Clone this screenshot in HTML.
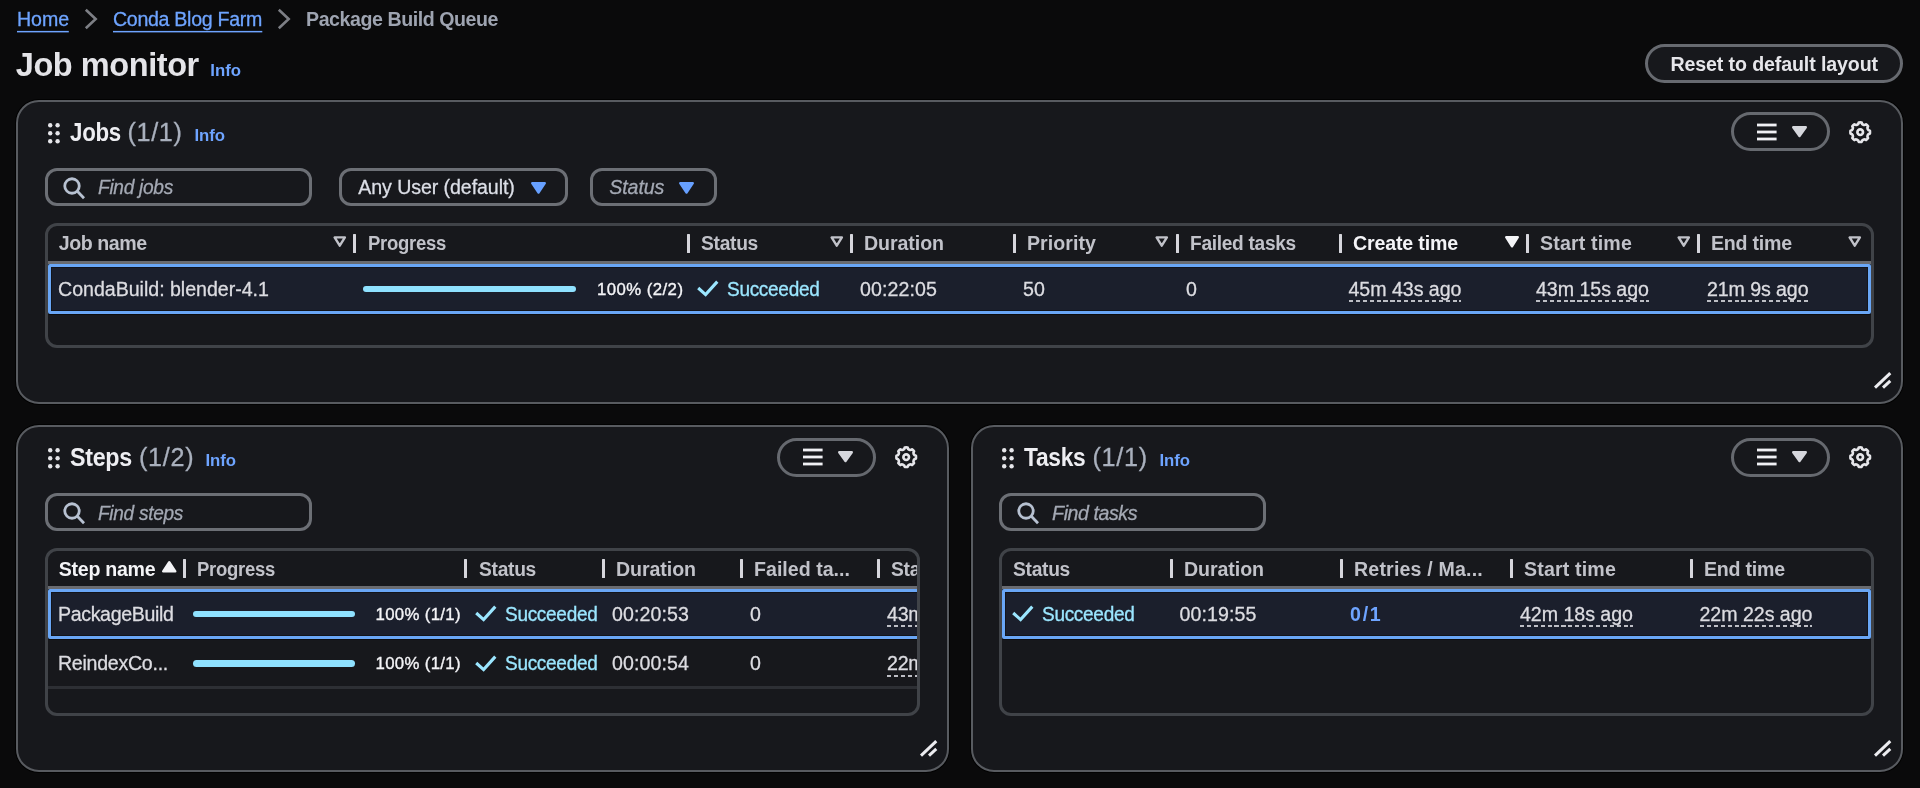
<!DOCTYPE html>
<html lang="en"><head><meta charset="utf-8"><title>Job monitor</title><style>
html,body{margin:0;padding:0;}
body{width:1920px;height:788px;overflow:hidden;background:#0a0a0b;font-family:"Liberation Sans",sans-serif;position:relative;}
#root{position:absolute;left:0;top:0;width:1920px;height:788px;will-change:transform;}
.t{position:absolute;margin:0;padding:0;font-weight:400;white-space:nowrap;line-height:1;-webkit-text-stroke:0.3px currentColor;}
.t.b{-webkit-text-stroke:0;}
.a{position:absolute;overflow:visible;}
.u{text-decoration:underline;text-decoration-thickness:1.5px;text-underline-offset:3.5px;}
</style></head><body>
<div id="root">
<nav aria-label="Breadcrumbs">
<a class="t" style="left:17.00px;top:10.41px;font-size:19.6px;color:#6ea4ff;letter-spacing:-0.071px;">Home</a>
<svg class="a" style="left:17.00px;top:29px" width="51.80" height="5" viewBox="0 0 51.80 5"><rect x="0" y="1.90" width="51.80" height="1.5" fill="#6ea4ff"/></svg>
<svg class="a" style="left:82.50px;top:7.35px" width="16" height="24" viewBox="0 0 16 24"><path d="M2.8 2.7 L12.7 12 L2.8 21.3" fill="none" stroke="#7d7f85" stroke-width="2.6" stroke-linejoin="miter"/></svg>
<a class="t" style="left:113.00px;top:10.41px;font-size:19.6px;color:#6ea4ff;letter-spacing:-0.307px;">Conda Blog Farm</a>
<svg class="a" style="left:113.00px;top:29px" width="149.30" height="5" viewBox="0 0 149.30 5"><rect x="0" y="1.90" width="149.30" height="1.5" fill="#6ea4ff"/></svg>
<svg class="a" style="left:276.40px;top:7.35px" width="16" height="24" viewBox="0 0 16 24"><path d="M2.8 2.7 L12.7 12 L2.8 21.3" fill="none" stroke="#7d7f85" stroke-width="2.6" stroke-linejoin="miter"/></svg>
<span class="t b" style="left:306.00px;top:10.41px;font-size:19.6px;color:#9ea4b1;font-weight:700;letter-spacing:-0.443px;">Package Build Queue</span>
</nav>
<header>
<h1 class="t b" style="left:15.80px;top:48.69px;font-size:32.5px;color:#e4e4e8;font-weight:700;letter-spacing:-0.433px;">Job monitor</h1>
<a class="t b" style="left:210.30px;top:63.18px;font-size:16.8px;color:#6ea4ff;font-weight:700;letter-spacing:-0.022px;">Info</a>
<div class="" style="position:absolute;left:1645px;top:44px;width:258px;height:39px;border:3px solid #676a70;border-radius:20px;box-sizing:border-box;background:#17181c;"></div>
<span class="t b" style="left:1670.50px;top:54.51px;font-size:19.6px;color:#e6e6ea;font-weight:700;letter-spacing:-0.117px;">Reset to default layout</span>
</header>
<main>
<section aria-label="Jobs">
<div class="" style="position:absolute;left:16px;top:100px;width:1887px;height:304px;box-sizing:border-box;background:#17181c;border:2px solid #585b60;border-radius:23px;box-shadow:0 0 0 1px #020202;"></div>
<svg class="a" style="left:47.8px;top:123.3px" width="12" height="21" viewBox="0 0 12 21" fill="#e6e6ea"><circle cx="2.2" cy="2.2" r="2.2"/><circle cx="2.2" cy="10.2" r="2.2"/><circle cx="2.2" cy="18.2" r="2.2"/><circle cx="9.6" cy="2.2" r="2.2"/><circle cx="9.6" cy="10.2" r="2.2"/><circle cx="9.6" cy="18.2" r="2.2"/></svg>
<h2 class="t b" style="left:70.30px;top:120.27px;font-size:25.2px;color:#eeeef2;transform:scaleX(0.8852);transform-origin:0 0;font-weight:700;letter-spacing:-0.300px;">Jobs</h2>
<span class="t" style="left:127.50px;top:120.27px;font-size:25.2px;color:#a9b0bd;letter-spacing:0.637px;">(1/1)</span>
<a class="t b" style="left:194.40px;top:128.38px;font-size:16.8px;color:#6ea4ff;font-weight:700;letter-spacing:-0.022px;">Info</a>
<div class="" style="position:absolute;left:1731px;top:112.4px;width:99px;height:39.099999999999994px;box-sizing:border-box;border:3px solid #66696f;border-radius:20px;"></div>
<svg class="a" style="left:1757.00px;top:122px" width="19.60" height="22" viewBox="0 0 19.60 22" fill="#f0f0f4"><rect x="0" y="1.60" width="19.60" height="2.8"/><rect x="0" y="8.60" width="19.60" height="2.8"/><rect x="0" y="15.60" width="19.60" height="2.8"/></svg>
<svg class="a" style="left:1792px;top:126.4px" width="15" height="11.299999999999983" viewBox="0 0 15 11.299999999999983"><path d="M1.2 1.2 H13.8 L7.5 10.099999999999984 Z" fill="#d6d7dd" stroke="#d6d7dd" stroke-width="2.4" stroke-linejoin="round"/></svg>
<svg class="a" style="left:1848.8px;top:120.8px" width="22.4" height="22.4" viewBox="0 0 16 16" fill="none" stroke="#e6e6ea" stroke-width="1.9" stroke-linejoin="round"><path d="M13.33 5.792a1.942 1.942 0 0 1 .287-1.97 6.984 6.984 0 0 0-1.44-1.439 1.943 1.943 0 0 1-3.159-1.308 6.965 6.965 0 0 0-2.037 0 1.943 1.943 0 0 1-3.158 1.308 6.962 6.962 0 0 0-1.44 1.44 1.943 1.943 0 0 1-1.308 3.158 6.972 6.972 0 0 0 0 2.037 1.943 1.943 0 0 1 1.308 3.159 6.952 6.952 0 0 0 1.44 1.439 1.942 1.942 0 0 1 3.159 1.309 6.962 6.962 0 0 0 2.036 0 1.942 1.942 0 0 1 3.159-1.309 6.974 6.974 0 0 0 1.439-1.44 1.943 1.943 0 0 1 1.309-3.158 6.972 6.972 0 0 0 0-2.037 1.942 1.942 0 0 1-1.596-1.189Z"/><circle cx="8" cy="8" r="2"/></svg>
<div class="" style="position:absolute;left:45px;top:168px;width:267px;height:38px;box-sizing:border-box;border:3px solid #6c6f75;border-radius:12px;"></div>
<svg class="a" style="left:61.55px;top:175.55px" width="24" height="24" viewBox="0 0 24 24" fill="none" stroke="#b7c1d1" stroke-width="2.8"><circle cx="10" cy="10" r="7.25"/><path d="M15.1 15.1 L22 22.2"/></svg>
<span class="t" style="left:97.70px;top:178.41px;font-size:19.6px;color:#a4a9b4;transform:scaleX(0.9762);transform-origin:0 0;font-style:italic;letter-spacing:-0.300px;">Find jobs</span>
<div class="" style="position:absolute;left:339px;top:168px;width:229px;height:38px;box-sizing:border-box;border:3px solid #6c6f75;border-radius:12px;"></div>
<span class="t" style="left:358.30px;top:177.81px;font-size:19.6px;color:#dcdfe7;letter-spacing:-0.081px;">Any User (default)</span>
<svg class="a" style="left:530.5px;top:181.6px" width="15.0" height="11.800000000000011" viewBox="0 0 15.0 11.800000000000011"><path d="M1.2 1.2 H13.8 L7.5 10.600000000000012 Z" fill="#67a0ff" stroke="#67a0ff" stroke-width="2.4" stroke-linejoin="round"/></svg>
<div class="" style="position:absolute;left:590px;top:168px;width:126.5px;height:38px;box-sizing:border-box;border:3px solid #6c6f75;border-radius:12px;"></div>
<span class="t" style="left:609.30px;top:177.81px;font-size:19.6px;color:#a4a9b4;font-style:italic;letter-spacing:-0.094px;">Status</span>
<svg class="a" style="left:679.0px;top:181.6px" width="15.0" height="11.800000000000011" viewBox="0 0 15.0 11.800000000000011"><path d="M1.2 1.2 H13.8 L7.5 10.600000000000012 Z" fill="#67a0ff" stroke="#67a0ff" stroke-width="2.4" stroke-linejoin="round"/></svg>
<div class="" style="position:absolute;left:45px;top:223px;width:1829px;height:125px;box-sizing:border-box;border:3px solid #404348;border-radius:12px;"></div>
<span class="t b" style="left:58.80px;top:234.21px;font-size:19.6px;color:#c1c2c9;font-weight:700;letter-spacing:-0.437px;">Job name</span>
<svg class="a" style="left:332.5px;top:236.4px" width="13.5" height="11.5" viewBox="0 0 13.5 11.5"><path d="M1.6 1.4 H11.9 L6.75 9.7 Z" fill="none" stroke="#c1c2c9" stroke-width="2.4" stroke-linejoin="round"/></svg>
<div class="" style="position:absolute;left:353px;top:234.0px;width:3px;height:18.799999999999983px;background:#d6d6dc;border-radius:0.5px;"></div>
<span class="t b" style="left:367.50px;top:234.21px;font-size:19.6px;color:#c1c2c9;transform:scaleX(0.9446);transform-origin:0 0;font-weight:700;letter-spacing:-0.300px;">Progress</span>
<div class="" style="position:absolute;left:687px;top:234.0px;width:3px;height:18.799999999999983px;background:#d6d6dc;border-radius:0.5px;"></div>
<span class="t b" style="left:701.00px;top:234.21px;font-size:19.6px;color:#c1c2c9;transform:scaleX(0.9810);transform-origin:0 0;font-weight:700;letter-spacing:-0.300px;">Status</span>
<svg class="a" style="left:829.5px;top:236.4px" width="13.5" height="11.5" viewBox="0 0 13.5 11.5"><path d="M1.6 1.4 H11.9 L6.75 9.7 Z" fill="none" stroke="#c1c2c9" stroke-width="2.4" stroke-linejoin="round"/></svg>
<div class="" style="position:absolute;left:850px;top:234.0px;width:3px;height:18.799999999999983px;background:#d6d6dc;border-radius:0.5px;"></div>
<span class="t b" style="left:864.00px;top:234.21px;font-size:19.6px;color:#c1c2c9;font-weight:700;letter-spacing:-0.072px;">Duration</span>
<div class="" style="position:absolute;left:1013px;top:234.0px;width:3px;height:18.799999999999983px;background:#d6d6dc;border-radius:0.5px;"></div>
<span class="t b" style="left:1027.00px;top:234.21px;font-size:19.6px;color:#c1c2c9;font-weight:700;letter-spacing:0.048px;">Priority</span>
<svg class="a" style="left:1155px;top:236.4px" width="13.5" height="11.5" viewBox="0 0 13.5 11.5"><path d="M1.6 1.4 H11.9 L6.75 9.7 Z" fill="none" stroke="#c1c2c9" stroke-width="2.4" stroke-linejoin="round"/></svg>
<div class="" style="position:absolute;left:1176px;top:234.0px;width:3px;height:18.799999999999983px;background:#d6d6dc;border-radius:0.5px;"></div>
<span class="t b" style="left:1190.00px;top:234.21px;font-size:19.6px;color:#c1c2c9;transform:scaleX(0.9759);transform-origin:0 0;font-weight:700;letter-spacing:-0.300px;">Failed tasks</span>
<div class="" style="position:absolute;left:1339px;top:234.0px;width:3px;height:18.799999999999983px;background:#d6d6dc;border-radius:0.5px;"></div>
<span class="t b" style="left:1353.00px;top:234.21px;font-size:19.6px;color:#f4f4f7;font-weight:700;letter-spacing:-0.160px;">Create time</span>
<svg class="a" style="left:1505px;top:236.4px" width="14" height="11.5" viewBox="0 0 14 11.5"><path d="M1.2 1.2 H12.8 L7.0 10.3 Z" fill="#f4f4f7" stroke="#f4f4f7" stroke-width="2.4" stroke-linejoin="round"/></svg>
<div class="" style="position:absolute;left:1526px;top:234.0px;width:3px;height:18.799999999999983px;background:#d6d6dc;border-radius:0.5px;"></div>
<span class="t b" style="left:1540.00px;top:234.21px;font-size:19.6px;color:#c1c2c9;font-weight:700;letter-spacing:0.160px;">Start time</span>
<svg class="a" style="left:1676.5px;top:236.4px" width="13.5" height="11.5" viewBox="0 0 13.5 11.5"><path d="M1.6 1.4 H11.9 L6.75 9.7 Z" fill="none" stroke="#c1c2c9" stroke-width="2.4" stroke-linejoin="round"/></svg>
<div class="" style="position:absolute;left:1697px;top:234.0px;width:3px;height:18.799999999999983px;background:#d6d6dc;border-radius:0.5px;"></div>
<span class="t b" style="left:1711.00px;top:234.21px;font-size:19.6px;color:#c1c2c9;font-weight:700;letter-spacing:-0.221px;">End time</span>
<svg class="a" style="left:1847.5px;top:236.4px" width="13.5" height="11.5" viewBox="0 0 13.5 11.5"><path d="M1.6 1.4 H11.9 L6.75 9.7 Z" fill="none" stroke="#c1c2c9" stroke-width="2.4" stroke-linejoin="round"/></svg>
<div class="" style="position:absolute;left:48px;top:261px;width:1823px;height:3px;background:#696b70;"></div>
<div class="" style="position:absolute;left:48px;top:264px;width:1823px;height:50px;box-sizing:border-box;border:3px solid #69a6f6;background:#1b1f2c;border-radius:2px;box-shadow:inset 0 0 0 1px #12141b,0 1px 0 #0c0c0e;"></div>
<span class="t" style="left:58.00px;top:279.71px;font-size:19.6px;color:#dcdce1;letter-spacing:-0.017px;">CondaBuild: blender-4.1</span>
<div class="" style="position:absolute;left:362.5px;top:285.8px;width:213.5px;height:6.399999999999977px;background:#8fe1ff;border-radius:4px;"></div>
<span class="t" style="left:597.00px;top:281.58px;font-size:16.8px;color:#f4f4f7;letter-spacing:0.432px;-webkit-text-stroke:0.35px #f4f4f7;">100% (2/2)</span>
<svg class="a" style="left:697px;top:280.1px" width="22" height="17" viewBox="0 0 22 17"><path d="M1.2 8 L8.6 14.6 L20.3 1.6" fill="none" stroke="#9be6ff" stroke-width="3.1" stroke-linejoin="miter"/></svg>
<span class="t" style="left:727.00px;top:279.71px;font-size:19.6px;color:#9be6ff;transform:scaleX(0.9698);transform-origin:0 0;letter-spacing:-0.300px;">Succeeded</span>
<span class="t" style="left:860.00px;top:279.71px;font-size:19.6px;color:#dcdce1;letter-spacing:0.088px;">00:22:05</span>
<span class="t" style="left:1023.00px;top:279.71px;font-size:19.6px;color:#dcdce1;letter-spacing:0.099px;">50</span>
<span class="t" style="left:1186.00px;top:279.71px;font-size:19.6px;color:#dcdce1;">0</span>
<span class="t" style="left:1348.50px;top:279.71px;font-size:19.6px;color:#dcdce1;letter-spacing:-0.029px;padding-bottom:2.9px;background:repeating-linear-gradient(90deg,#bdbec5 0,#bdbec5 4.1px,transparent 4.1px,transparent 6.9px) left bottom/100% 2px no-repeat;">45m 43s ago</span>
<span class="t" style="left:1536.00px;top:279.71px;font-size:19.6px;color:#dcdce1;letter-spacing:-0.029px;padding-bottom:2.9px;background:repeating-linear-gradient(90deg,#bdbec5 0,#bdbec5 4.1px,transparent 4.1px,transparent 6.9px) left bottom/100% 2px no-repeat;">43m 15s ago</span>
<span class="t" style="left:1707.00px;top:279.71px;font-size:19.6px;color:#dcdce1;letter-spacing:-0.092px;padding-bottom:2.9px;background:repeating-linear-gradient(90deg,#bdbec5 0,#bdbec5 4.1px,transparent 4.1px,transparent 6.9px) left bottom/100% 2px no-repeat;">21m 9s ago</span>
<svg class="a" style="left:1873px;top:371.2px" width="20" height="20" viewBox="-2 -2 20 20" stroke="#ececf0" stroke-width="3" fill="none"><path d="M0 14.6 L15.3 0.2"/><path d="M8 14.7 L15.3 7.9"/></svg>
</section>
<section aria-label="Steps">
<div class="" style="position:absolute;left:16px;top:425px;width:933px;height:347px;box-sizing:border-box;background:#17181c;border:2px solid #585b60;border-radius:23px;box-shadow:0 0 0 1px #020202;"></div>
<svg class="a" style="left:47.8px;top:448.3px" width="12" height="21" viewBox="0 0 12 21" fill="#e6e6ea"><circle cx="2.2" cy="2.2" r="2.2"/><circle cx="2.2" cy="10.2" r="2.2"/><circle cx="2.2" cy="18.2" r="2.2"/><circle cx="9.6" cy="2.2" r="2.2"/><circle cx="9.6" cy="10.2" r="2.2"/><circle cx="9.6" cy="18.2" r="2.2"/></svg>
<h2 class="t b" style="left:70.30px;top:445.27px;font-size:25.2px;color:#eeeef2;transform:scaleX(0.9237);transform-origin:0 0;font-weight:700;letter-spacing:-0.300px;">Steps</h2>
<span class="t" style="left:139.00px;top:445.27px;font-size:25.2px;color:#a9b0bd;letter-spacing:0.737px;">(1/2)</span>
<a class="t b" style="left:205.40px;top:453.38px;font-size:16.8px;color:#6ea4ff;font-weight:700;letter-spacing:-0.022px;">Info</a>
<div class="" style="position:absolute;left:777px;top:437.9px;width:99px;height:39.10000000000002px;box-sizing:border-box;border:3px solid #66696f;border-radius:20px;"></div>
<svg class="a" style="left:803.00px;top:447px" width="19.60" height="22" viewBox="0 0 19.60 22" fill="#f0f0f4"><rect x="0" y="1.60" width="19.60" height="2.8"/><rect x="0" y="8.60" width="19.60" height="2.8"/><rect x="0" y="15.60" width="19.60" height="2.8"/></svg>
<svg class="a" style="left:838px;top:451.4px" width="15" height="11.300000000000011" viewBox="0 0 15 11.300000000000011"><path d="M1.2 1.2 H13.8 L7.5 10.100000000000012 Z" fill="#d6d7dd" stroke="#d6d7dd" stroke-width="2.4" stroke-linejoin="round"/></svg>
<svg class="a" style="left:894.8px;top:445.8px" width="22.4" height="22.4" viewBox="0 0 16 16" fill="none" stroke="#e6e6ea" stroke-width="1.9" stroke-linejoin="round"><path d="M13.33 5.792a1.942 1.942 0 0 1 .287-1.97 6.984 6.984 0 0 0-1.44-1.439 1.943 1.943 0 0 1-3.159-1.308 6.965 6.965 0 0 0-2.037 0 1.943 1.943 0 0 1-3.158 1.308 6.962 6.962 0 0 0-1.44 1.44 1.943 1.943 0 0 1-1.308 3.158 6.972 6.972 0 0 0 0 2.037 1.943 1.943 0 0 1 1.308 3.159 6.952 6.952 0 0 0 1.44 1.439 1.942 1.942 0 0 1 3.159 1.309 6.962 6.962 0 0 0 2.036 0 1.942 1.942 0 0 1 3.159-1.309 6.974 6.974 0 0 0 1.439-1.44 1.943 1.943 0 0 1 1.309-3.158 6.972 6.972 0 0 0 0-2.037 1.942 1.942 0 0 1-1.596-1.189Z"/><circle cx="8" cy="8" r="2"/></svg>
<div class="" style="position:absolute;left:45px;top:493.3px;width:267px;height:37.99999999999994px;box-sizing:border-box;border:3px solid #6c6f75;border-radius:12px;"></div>
<svg class="a" style="left:61.55px;top:500.85px" width="24" height="24" viewBox="0 0 24 24" fill="none" stroke="#b7c1d1" stroke-width="2.8"><circle cx="10" cy="10" r="7.25"/><path d="M15.1 15.1 L22 22.2"/></svg>
<span class="t" style="left:97.70px;top:503.71px;font-size:19.6px;color:#a4a9b4;transform:scaleX(0.9723);transform-origin:0 0;font-style:italic;letter-spacing:-0.300px;">Find steps</span>
<div style="position:absolute;left:0;top:0;width:916.6px;height:788px;overflow:hidden">
<span class="t b" style="left:58.80px;top:560.21px;font-size:19.6px;color:#f4f4f7;font-weight:700;letter-spacing:-0.291px;">Step name</span>
<svg class="a" style="left:162px;top:561px" width="14.5" height="11.5" viewBox="0 0 14.5 11.5"><path d="M1.2 10.3 H13.3 L7.25 1.2 Z" fill="#f4f4f7" stroke="#f4f4f7" stroke-width="2.4" stroke-linejoin="round"/></svg>
<div class="" style="position:absolute;left:183px;top:559.3px;width:3px;height:18.800000000000068px;background:#d6d6dc;border-radius:0.5px;"></div>
<span class="t b" style="left:197.00px;top:560.21px;font-size:19.6px;color:#c1c2c9;transform:scaleX(0.9446);transform-origin:0 0;font-weight:700;letter-spacing:-0.300px;">Progress</span>
<div class="" style="position:absolute;left:464px;top:559.3px;width:3px;height:18.800000000000068px;background:#d6d6dc;border-radius:0.5px;"></div>
<span class="t b" style="left:479.00px;top:560.21px;font-size:19.6px;color:#c1c2c9;transform:scaleX(0.9810);transform-origin:0 0;font-weight:700;letter-spacing:-0.300px;">Status</span>
<div class="" style="position:absolute;left:602px;top:559.3px;width:3px;height:18.800000000000068px;background:#d6d6dc;border-radius:0.5px;"></div>
<span class="t b" style="left:616.00px;top:560.21px;font-size:19.6px;color:#c1c2c9;font-weight:700;letter-spacing:-0.072px;">Duration</span>
<div class="" style="position:absolute;left:740px;top:559.3px;width:3px;height:18.800000000000068px;background:#d6d6dc;border-radius:0.5px;"></div>
<span class="t b" style="left:754.00px;top:560.21px;font-size:19.6px;color:#c1c2c9;font-weight:700;letter-spacing:0.013px;">Failed ta...</span>
<div class="" style="position:absolute;left:877px;top:559.3px;width:3px;height:18.800000000000068px;background:#d6d6dc;border-radius:0.5px;"></div>
<span class="t b" style="left:891.00px;top:560.21px;font-size:19.6px;color:#c1c2c9;transform:scaleX(0.9810);transform-origin:0 0;font-weight:700;letter-spacing:-0.300px;">Status</span>
<div class="" style="position:absolute;left:48px;top:586px;width:869px;height:3px;background:#696b70;"></div>
<div class="" style="position:absolute;left:48px;top:589px;width:882px;height:50px;box-sizing:border-box;border:3px solid #69a6f6;background:#1b1f2c;border-radius:2px;box-shadow:inset 0 0 0 1px #12141b,0 1px 0 #0c0c0e;"></div>
<span class="t" style="left:58.00px;top:604.91px;font-size:19.6px;color:#dcdce1;letter-spacing:-0.363px;">PackageBuild</span>
<div class="" style="position:absolute;left:192.5px;top:610.8px;width:162.0px;height:6.400000000000091px;background:#8fe1ff;border-radius:4px;"></div>
<span class="t" style="left:375.50px;top:606.78px;font-size:16.8px;color:#f4f4f7;letter-spacing:0.332px;-webkit-text-stroke:0.35px #f4f4f7;">100% (1/1)</span>
<svg class="a" style="left:474.5px;top:605.3000000000001px" width="22" height="17" viewBox="0 0 22 17"><path d="M1.2 8 L8.6 14.6 L20.3 1.6" fill="none" stroke="#9be6ff" stroke-width="3.1" stroke-linejoin="miter"/></svg>
<span class="t" style="left:505.00px;top:604.91px;font-size:19.6px;color:#9be6ff;transform:scaleX(0.9698);transform-origin:0 0;letter-spacing:-0.300px;">Succeeded</span>
<span class="t" style="left:612.00px;top:604.91px;font-size:19.6px;color:#dcdce1;letter-spacing:0.088px;">00:20:53</span>
<span class="t" style="left:750.00px;top:604.91px;font-size:19.6px;color:#dcdce1;">0</span>
<span class="t" style="left:887.00px;top:604.91px;font-size:19.6px;color:#dcdce1;letter-spacing:-0.242px;padding-bottom:2.9px;background:repeating-linear-gradient(90deg,#bdbec5 0,#bdbec5 4.1px,transparent 4.1px,transparent 6.9px) left bottom/100% 2px no-repeat;">43m 1s ago</span>
<span class="t" style="left:58.00px;top:654.41px;font-size:19.6px;color:#dcdce1;letter-spacing:-0.275px;">ReindexCo...</span>
<div class="" style="position:absolute;left:192.5px;top:660.3px;width:162.0px;height:6.400000000000091px;background:#8fe1ff;border-radius:4px;"></div>
<span class="t" style="left:375.50px;top:656.28px;font-size:16.8px;color:#f4f4f7;letter-spacing:0.332px;-webkit-text-stroke:0.35px #f4f4f7;">100% (1/1)</span>
<svg class="a" style="left:474.5px;top:654.8000000000001px" width="22" height="17" viewBox="0 0 22 17"><path d="M1.2 8 L8.6 14.6 L20.3 1.6" fill="none" stroke="#9be6ff" stroke-width="3.1" stroke-linejoin="miter"/></svg>
<span class="t" style="left:505.00px;top:654.41px;font-size:19.6px;color:#9be6ff;transform:scaleX(0.9698);transform-origin:0 0;letter-spacing:-0.300px;">Succeeded</span>
<span class="t" style="left:612.00px;top:654.41px;font-size:19.6px;color:#dcdce1;letter-spacing:0.088px;">00:00:54</span>
<span class="t" style="left:750.00px;top:654.41px;font-size:19.6px;color:#dcdce1;">0</span>
<span class="t" style="left:887.00px;top:654.41px;font-size:19.6px;color:#dcdce1;letter-spacing:-0.242px;padding-bottom:2.9px;background:repeating-linear-gradient(90deg,#bdbec5 0,#bdbec5 4.1px,transparent 4.1px,transparent 6.9px) left bottom/100% 2px no-repeat;">22m 5s ago</span>
<div class="" style="position:absolute;left:48px;top:685.5px;width:869px;height:3.0px;background:#2d2f34;"></div>
</div>
<div class="" style="position:absolute;left:45px;top:548px;width:874.5px;height:168px;box-sizing:border-box;border:3px solid #404348;border-radius:12px;"></div>
<svg class="a" style="left:919px;top:739.2px" width="20" height="20" viewBox="-2 -2 20 20" stroke="#ececf0" stroke-width="3" fill="none"><path d="M0 14.6 L15.3 0.2"/><path d="M8 14.7 L15.3 7.9"/></svg>
</section>
<section aria-label="Tasks">
<div class="" style="position:absolute;left:971px;top:425px;width:932px;height:347px;box-sizing:border-box;background:#17181c;border:2px solid #585b60;border-radius:23px;box-shadow:0 0 0 1px #020202;"></div>
<svg class="a" style="left:1001.8px;top:448.3px" width="12" height="21" viewBox="0 0 12 21" fill="#e6e6ea"><circle cx="2.2" cy="2.2" r="2.2"/><circle cx="2.2" cy="10.2" r="2.2"/><circle cx="2.2" cy="18.2" r="2.2"/><circle cx="9.6" cy="2.2" r="2.2"/><circle cx="9.6" cy="10.2" r="2.2"/><circle cx="9.6" cy="18.2" r="2.2"/></svg>
<h2 class="t b" style="left:1024.30px;top:445.27px;font-size:25.2px;color:#eeeef2;transform:scaleX(0.9033);transform-origin:0 0;font-weight:700;letter-spacing:-0.300px;">Tasks</h2>
<span class="t" style="left:1092.50px;top:445.27px;font-size:25.2px;color:#a9b0bd;letter-spacing:0.737px;">(1/1)</span>
<a class="t b" style="left:1159.40px;top:453.38px;font-size:16.8px;color:#6ea4ff;font-weight:700;letter-spacing:-0.022px;">Info</a>
<div class="" style="position:absolute;left:1731px;top:437.9px;width:99px;height:39.10000000000002px;box-sizing:border-box;border:3px solid #66696f;border-radius:20px;"></div>
<svg class="a" style="left:1757.00px;top:447px" width="19.60" height="22" viewBox="0 0 19.60 22" fill="#f0f0f4"><rect x="0" y="1.60" width="19.60" height="2.8"/><rect x="0" y="8.60" width="19.60" height="2.8"/><rect x="0" y="15.60" width="19.60" height="2.8"/></svg>
<svg class="a" style="left:1792px;top:451.4px" width="15" height="11.300000000000011" viewBox="0 0 15 11.300000000000011"><path d="M1.2 1.2 H13.8 L7.5 10.100000000000012 Z" fill="#d6d7dd" stroke="#d6d7dd" stroke-width="2.4" stroke-linejoin="round"/></svg>
<svg class="a" style="left:1848.8px;top:445.8px" width="22.4" height="22.4" viewBox="0 0 16 16" fill="none" stroke="#e6e6ea" stroke-width="1.9" stroke-linejoin="round"><path d="M13.33 5.792a1.942 1.942 0 0 1 .287-1.97 6.984 6.984 0 0 0-1.44-1.439 1.943 1.943 0 0 1-3.159-1.308 6.965 6.965 0 0 0-2.037 0 1.943 1.943 0 0 1-3.158 1.308 6.962 6.962 0 0 0-1.44 1.44 1.943 1.943 0 0 1-1.308 3.158 6.972 6.972 0 0 0 0 2.037 1.943 1.943 0 0 1 1.308 3.159 6.952 6.952 0 0 0 1.44 1.439 1.942 1.942 0 0 1 3.159 1.309 6.962 6.962 0 0 0 2.036 0 1.942 1.942 0 0 1 3.159-1.309 6.974 6.974 0 0 0 1.439-1.44 1.943 1.943 0 0 1 1.309-3.158 6.972 6.972 0 0 0 0-2.037 1.942 1.942 0 0 1-1.596-1.189Z"/><circle cx="8" cy="8" r="2"/></svg>
<div class="" style="position:absolute;left:999.4px;top:493.3px;width:267.0000000000001px;height:37.99999999999994px;box-sizing:border-box;border:3px solid #6c6f75;border-radius:12px;"></div>
<svg class="a" style="left:1015.95px;top:500.85px" width="24" height="24" viewBox="0 0 24 24" fill="none" stroke="#b7c1d1" stroke-width="2.8"><circle cx="10" cy="10" r="7.25"/><path d="M15.1 15.1 L22 22.2"/></svg>
<span class="t" style="left:1052.10px;top:503.71px;font-size:19.6px;color:#a4a9b4;font-style:italic;letter-spacing:-0.432px;">Find tasks</span>
<div class="" style="position:absolute;left:999.4px;top:548px;width:874.6px;height:168px;box-sizing:border-box;border:3px solid #404348;border-radius:12px;"></div>
<span class="t b" style="left:1013.00px;top:560.21px;font-size:19.6px;color:#c1c2c9;transform:scaleX(0.9810);transform-origin:0 0;font-weight:700;letter-spacing:-0.300px;">Status</span>
<div class="" style="position:absolute;left:1170px;top:559.3px;width:3px;height:18.800000000000068px;background:#d6d6dc;border-radius:0.5px;"></div>
<span class="t b" style="left:1184.00px;top:560.21px;font-size:19.6px;color:#c1c2c9;font-weight:700;letter-spacing:-0.072px;">Duration</span>
<div class="" style="position:absolute;left:1340px;top:559.3px;width:3px;height:18.800000000000068px;background:#d6d6dc;border-radius:0.5px;"></div>
<span class="t b" style="left:1354.00px;top:560.21px;font-size:19.6px;color:#c1c2c9;font-weight:700;letter-spacing:0.176px;">Retries / Ma...</span>
<div class="" style="position:absolute;left:1510px;top:559.3px;width:3px;height:18.800000000000068px;background:#d6d6dc;border-radius:0.5px;"></div>
<span class="t b" style="left:1524.00px;top:560.21px;font-size:19.6px;color:#c1c2c9;font-weight:700;letter-spacing:0.160px;">Start time</span>
<div class="" style="position:absolute;left:1690px;top:559.3px;width:3px;height:18.800000000000068px;background:#d6d6dc;border-radius:0.5px;"></div>
<span class="t b" style="left:1704.00px;top:560.21px;font-size:19.6px;color:#c1c2c9;font-weight:700;letter-spacing:-0.221px;">End time</span>
<div class="" style="position:absolute;left:1002px;top:586px;width:869px;height:3px;background:#696b70;"></div>
<div class="" style="position:absolute;left:1002px;top:589px;width:869px;height:50px;box-sizing:border-box;border:3px solid #69a6f6;background:#1b1f2c;border-radius:2px;box-shadow:inset 0 0 0 1px #12141b,0 1px 0 #0c0c0e;"></div>
<svg class="a" style="left:1012px;top:605.3000000000001px" width="22" height="17" viewBox="0 0 22 17"><path d="M1.2 8 L8.6 14.6 L20.3 1.6" fill="none" stroke="#9be6ff" stroke-width="3.1" stroke-linejoin="miter"/></svg>
<span class="t" style="left:1042.00px;top:604.91px;font-size:19.6px;color:#9be6ff;transform:scaleX(0.9698);transform-origin:0 0;letter-spacing:-0.300px;">Succeeded</span>
<span class="t" style="left:1179.50px;top:604.91px;font-size:19.6px;color:#dcdce1;letter-spacing:0.088px;">00:19:55</span>
<span class="t b" style="left:1350.00px;top:604.91px;font-size:19.6px;color:#6ea4ff;font-weight:700;letter-spacing:1.751px;">0/1</span>
<span class="t" style="left:1520.00px;top:604.91px;font-size:19.6px;color:#dcdce1;letter-spacing:-0.029px;padding-bottom:2.9px;background:repeating-linear-gradient(90deg,#bdbec5 0,#bdbec5 4.1px,transparent 4.1px,transparent 6.9px) left bottom/100% 2px no-repeat;">42m 18s ago</span>
<span class="t" style="left:1699.50px;top:604.91px;font-size:19.6px;color:#dcdce1;letter-spacing:-0.029px;padding-bottom:2.9px;background:repeating-linear-gradient(90deg,#bdbec5 0,#bdbec5 4.1px,transparent 4.1px,transparent 6.9px) left bottom/100% 2px no-repeat;">22m 22s ago</span>
<svg class="a" style="left:1873px;top:739.2px" width="20" height="20" viewBox="-2 -2 20 20" stroke="#ececf0" stroke-width="3" fill="none"><path d="M0 14.6 L15.3 0.2"/><path d="M8 14.7 L15.3 7.9"/></svg>
</section>
</main>
</div>
</body></html>
